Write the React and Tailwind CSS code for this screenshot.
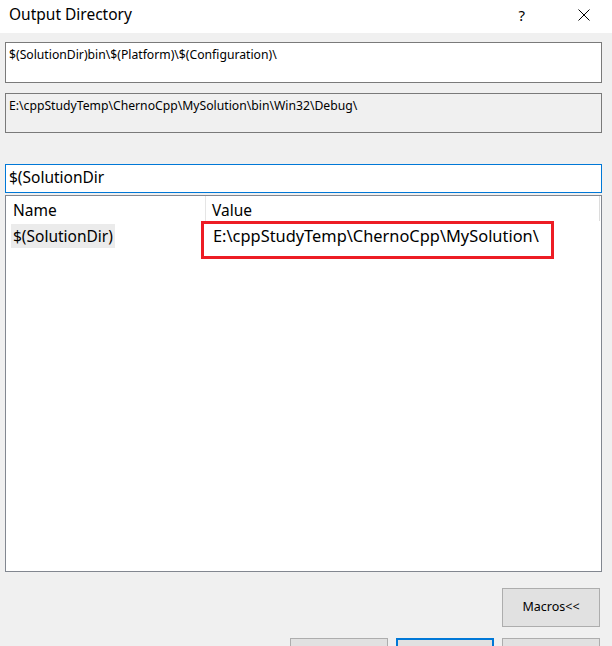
import React from "react";

const font = { fontFamily: '"Noto Sans", "Open Sans", sans-serif' };

const Button = ({ label, primary }) => (
  <button
    className={`w-[98px] h-[39px] bg-[#e1e1e1] text-[12.5px] text-black ${
      primary ? "border-2 border-[#0078d7]" : "border border-[#adadad]"
    }`}
  >
    {label}
  </button>
);

const App = () => {
  return (
    <div
      className="w-[612px] h-[646px] bg-[#f0f0f0] overflow-hidden flex flex-col text-black"
      style={font}
    >
      {/* title bar */}
      <div className="h-[33px] bg-white flex items-center pl-[9px] pb-[3px] shrink-0">
        <span className="text-[15.5px]">Output Directory</span>
        <span className="ml-auto text-[15px] mr-[53px]">?</span>
        <svg width="12" height="12" viewBox="0 0 12 12" className="mr-[22px]">
          <path d="M0.5 0.5 L11.5 11.5 M11.5 0.5 L0.5 11.5" stroke="#000" strokeWidth="1" />
        </svg>
      </div>

      <div className="px-[5px] pr-[10px] flex flex-col">
        <div className="mt-[9px] h-[41px] bg-white border border-[#7a7a7a] px-[3px] pt-[4px] text-[12.2px] leading-[16px]">
          $(SolutionDir)bin\$(Platform)\$(Configuration)\
        </div>
        <div className="mt-[10px] h-[40px] bg-[#f0f0f0] border border-[#7a7a7a] px-[3px] pt-[4px] text-[12.2px] leading-[16px]">
          E:\cppStudyTemp\ChernoCpp\MySolution\bin\Win32\Debug\
        </div>

        <div className="mt-[31px] h-[29px] bg-white border border-[#0078d7] flex items-center px-[3px] pb-[2px] text-[15.5px]">
          $(SolutionDir
        </div>

        {/* macro list */}
        <div className="relative mt-[2px] h-[377px] bg-white border border-[#828790] text-[15.5px]">
          <div className="flex h-[26px]">
            <div className="w-[200px] pl-[7px] pb-[2px] flex items-end border-r border-[#e5e5e5] leading-[20px]">
              Name
            </div>
            <div className="pl-[6px] pb-[2px] flex items-end leading-[20px]">Value</div>
            <div className="ml-auto w-px h-[25px] bg-[#dcdcdc] mr-[1px]" />
          </div>
          <div className="flex h-[24px] items-center mt-[2px]">
            <div className="w-[200px] pl-[5px]">
              <span className="bg-[#ebebeb] px-[2px] leading-[24px] inline-block">
                $(SolutionDir)
              </span>
            </div>
            <div className="pl-[7px] text-[16.4px]">E:\cppStudyTemp\ChernoCpp\MySolution\</div>
          </div>
          {/* annotation box */}
          <div className="absolute left-[195px] top-[25px] w-[353px] h-[38px] border-[3px] border-[#ed1c24]" />
        </div>

        <div className="mt-[16px] flex justify-end pr-[2px]">
          <Button label="Macros<<" />
        </div>
        <div className="mt-[11px] flex justify-end gap-[8px] pr-[2px]">
          <Button />
          <Button primary />
          <Button />
        </div>
      </div>
    </div>
  );
};

export default App;
